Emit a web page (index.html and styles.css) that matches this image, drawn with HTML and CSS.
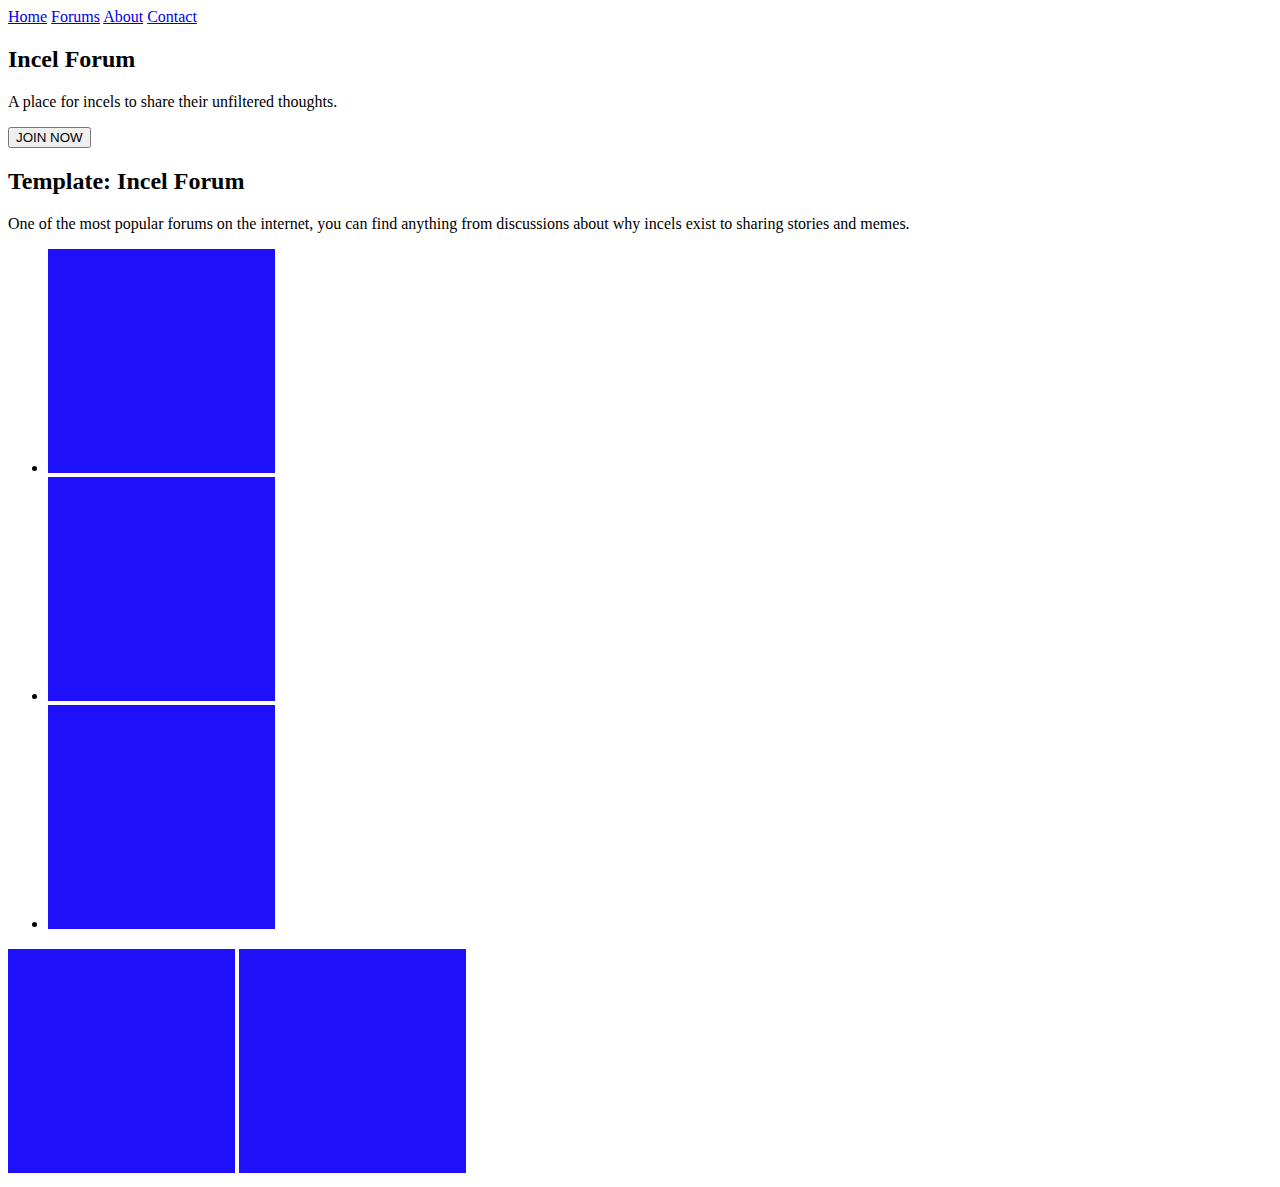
FILE: index.html
```html
<!DOCTYPE html>
<html>
<head>
<meta charset="utf-8">
<title>Incel Forum</title>
<link rel="stylesheet" href="styles.css">
</head>
<body>
<nav class="nav"><a href="#">Home</a> <a href="#">Forums</a> <a href="#">About</a> <a href="#">Contact</a></nav>
<header>
<h2>Incel Forum</h2>
<p>A place for incels to share their unfiltered thoughts.</p>
<button class="join">JOIN NOW</button>
</header>
<section>
<h2>Template: Incel Forum</h2>
<p>One of the most popular forums on the internet, you can find anything from discussions about why incels exist to sharing stories and memes.</p>
<ul>
<li><span class="tile"></span></li>
<li><span class="tile"></span></li>
<li><span class="tile"></span></li>
</ul>
<div class="row"><span class="tile"></span> <span class="tile"></span></div>
</section>
</body>
</html>
```
FILE: styles.css
```css
body {
  margin: 8px;
  font-family: "Liberation Serif", "Times New Roman", serif;
  font-size: 16px;
  color: #000;
  background: #fff;
}
.nav a {
  color: #0000ee;
}
h2 {
  font-size: 1.5em;
  margin: 0.83em 0;
}
p {
  margin: 1em 0;
}
.join {
  font-family: "Liberation Sans", Arial, sans-serif;
  font-size: 13.333px;
}
ul {
  margin: 1em 0;
  padding-left: 40px;
}
.tile {
  display: inline-block;
  width: 227px;
  height: 224px;
  background: #1e10f8;
  vertical-align: baseline;
}
```
